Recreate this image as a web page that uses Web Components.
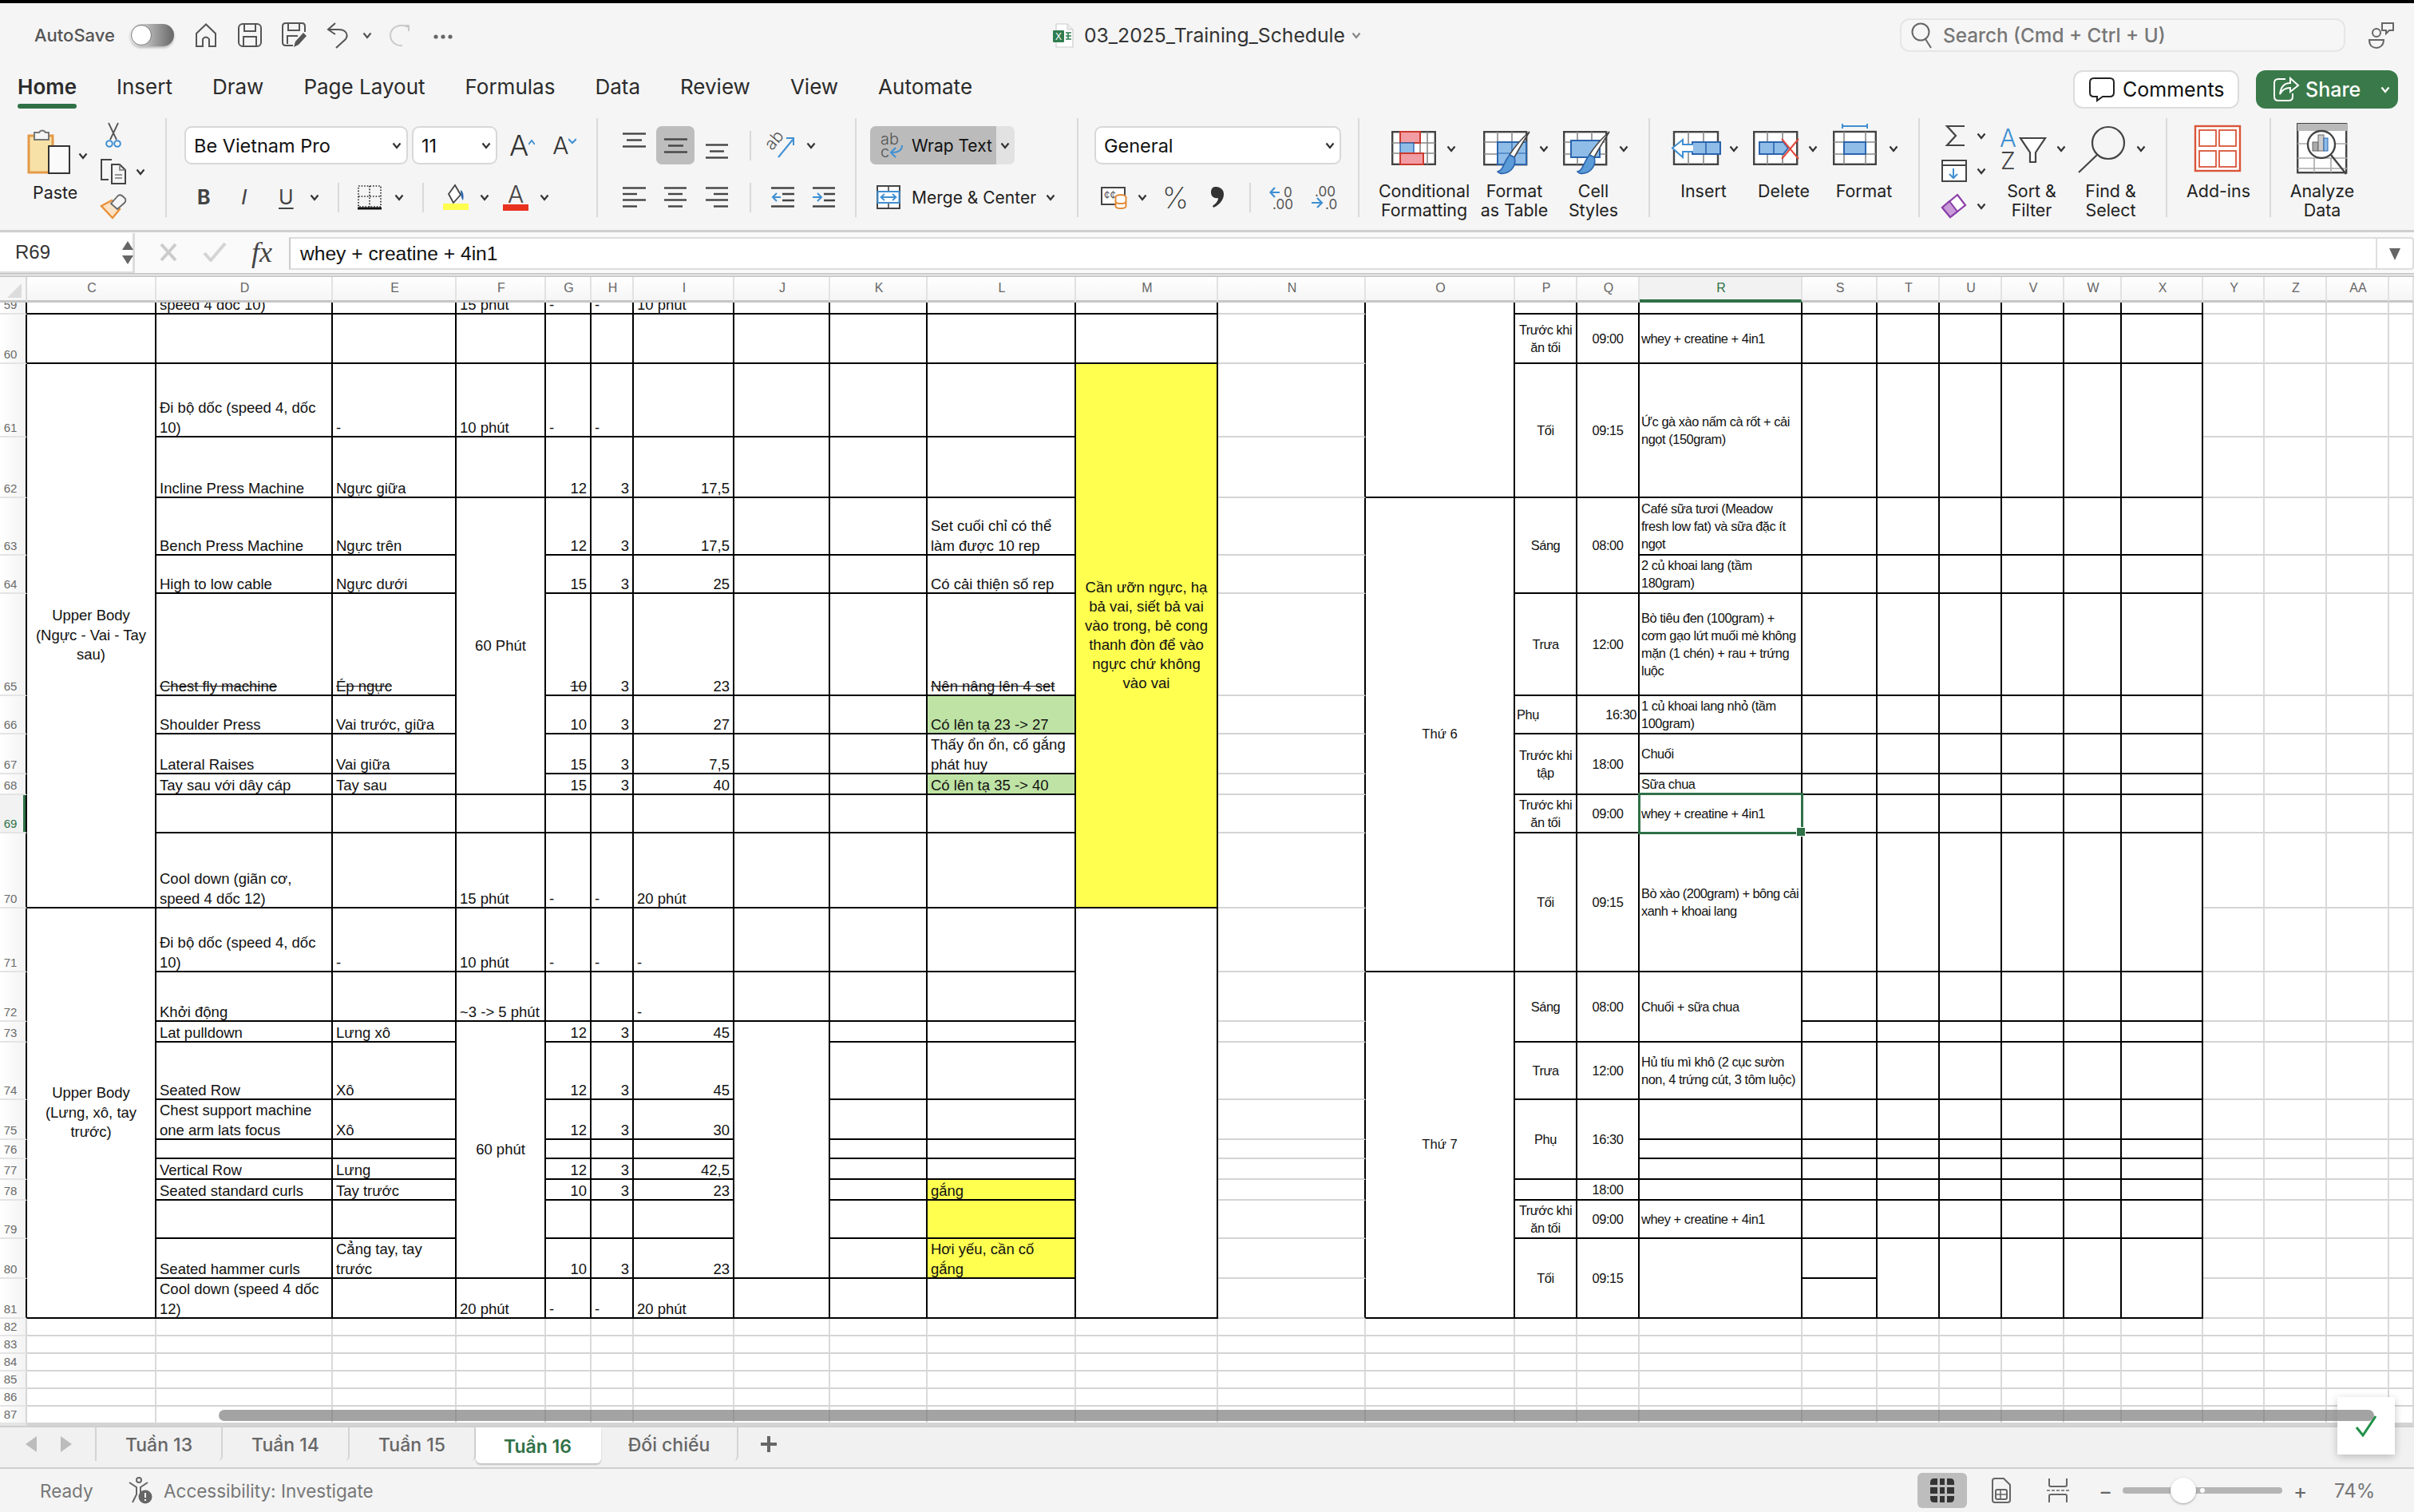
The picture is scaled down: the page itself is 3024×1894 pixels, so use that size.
<!doctype html>
<html lang="vi">
<head>
<meta charset="utf-8">
<title>03_2025_Training_Schedule</title>
<style>
  html, body { margin: 0; padding: 0; background: #f5f5f5; overflow: hidden; }
  body { font-family: Inter, "Liberation Sans", sans-serif; }
</style>
</head>
<body>
<xl-app>
  <xl-titlebar></xl-titlebar>
  <xl-menubar>
    <xl-menu-tab active>Home</xl-menu-tab>
    <xl-menu-tab>Insert</xl-menu-tab>
    <xl-menu-tab>Draw</xl-menu-tab>
    <xl-menu-tab>Page Layout</xl-menu-tab>
    <xl-menu-tab>Formulas</xl-menu-tab>
    <xl-menu-tab>Data</xl-menu-tab>
    <xl-menu-tab>Review</xl-menu-tab>
    <xl-menu-tab>View</xl-menu-tab>
    <xl-menu-tab>Automate</xl-menu-tab>
  </xl-menubar>
  <xl-ribbon></xl-ribbon>
  <xl-formula name="R69">whey + creatine + 4in1</xl-formula>
  <xl-sheet></xl-sheet>
  <xl-sheet-tabs>
    <xl-sheet-tab w="158">Tuần 13</xl-sheet-tab>
    <xl-sheet-tab w="159">Tuần 14</xl-sheet-tab>
    <xl-sheet-tab w="158">Tuần 15</xl-sheet-tab>
    <xl-sheet-tab w="157" active>Tuần 16</xl-sheet-tab>
    <xl-sheet-tab w="172">Đối chiếu</xl-sheet-tab>
  </xl-sheet-tabs>
  <xl-status></xl-status>
  <xl-toast></xl-toast>
</xl-app>

<script>
const D = '#444'
const BL = '#3f8fd2'
const LB = '#8fbde8'
const DB = '#2b64ad'

const lines = (w, rows) => rows.map(([y, a, b]) => `<path d="M${a} ${y}H${b}" stroke="${D}" stroke-width="2.4"/>`).join('')
const brush = `<path d="M58 1C53 9 45 22 39 33L33 30C40 19 50 8 58 1Z" fill="#fff" stroke="${D}" stroke-width="1.6"/><path d="M33 30L39 33C42 42 36 51 27 53C23 54 19 53 18 51C25 50 25 40 33 30Z" fill="#5a9bd8" stroke="${DB}" stroke-width="1.6"/>`
const tableGrid = `<rect x="1.2" y="1.2" width="53" height="41" fill="#fff" stroke="${D}" stroke-width="2.4"/><path d="M1 14H54M1 29H54M18 1V42M36 1V42" stroke="#888" stroke-width="1.6"/>`

const ICONS = {
  home: [28, 30, `<path d="M2 29V13L14 1.5L26 13V29H18V20Q14 15 10 20V29Z" fill="none" stroke="#555" stroke-width="2"/>`],
  save: [30, 30, `<rect x="1" y="1" width="28" height="28" rx="5" fill="none" stroke="#555" stroke-width="2"/><path d="M8 1V10H22V1M7 29V17H23V29" fill="none" stroke="#555" stroke-width="2"/>`],
  saveas: [32, 32, `<path d="M14 29H5Q1 29 1 25V5Q1 1 5 1H25Q29 1 29 5V12" fill="none" stroke="#555" stroke-width="2"/><path d="M8 1V10H22V1M7 27V17H20" fill="none" stroke="#555" stroke-width="2"/><path d="M15 31L17 24L27 13L31 17L21 28Z" fill="#555"/>`],
  undo: [28, 32, `<path d="M11 1L2 9L11 15M2 9H15C24 9 28 15 24 21L12 32" fill="none" stroke="#555" stroke-width="2"/>`],
  redo: [28, 30, `<path d="M20 3H25V10M24 5C14 -1 2 6 2 15C2 24 10 29 17 28" fill="none" stroke="#c9c9c9" stroke-width="2"/>`],
  dots: [24, 6, `<circle cx="3" cy="3" r="2.6" fill="#666"/><circle cx="12" cy="3" r="2.6" fill="#666"/><circle cx="21" cy="3" r="2.6" fill="#666"/>`],
  xlsx: [26, 31, `<path d="M4 1H18L25 8V30H4Z" fill="#fff" stroke="#ccc" stroke-width="1.2"/><path d="M18 1V8H25" fill="#eee" stroke="#ccc" stroke-width="1"/><rect x="0" y="9" width="14" height="15" rx="1" fill="#2f7d4f"/><text x="7" y="21" font-size="12" fill="#fff" text-anchor="middle" font-family="Liberation Sans">X</text><path d="M16 12H23M16 16H23M16 20H23M19 12V20" stroke="#2f7d4f" stroke-width="1.6"/>`],
  search: [26, 34, `<circle cx="12" cy="13" r="10.5" fill="none" stroke="#666" stroke-width="2"/><path d="M18 22L25 33" stroke="#666" stroke-width="2"/>`],
  person: [32, 32, `<circle cx="10" cy="13" r="5" fill="none" stroke="#666" stroke-width="2"/><path d="M1 22H19C19 29 14 32 10 32C5 32 1 29 1 22Z" fill="none" stroke="#666" stroke-width="2"/><path d="M17 1H31V10H26L22 14V10H17Z" fill="#f5f5f5" stroke="#666" stroke-width="2"/>`],
  comment: [32, 30, `<path d="M6 1H26Q31 1 31 6V19Q31 24 26 24H17L10 29V24H6Q1 24 1 19V6Q1 1 6 1Z" fill="#fff" stroke="#222" stroke-width="2"/>`],
  share: [31, 30, `<path d="M15 2H6Q1 2 1 7V24Q1 29 6 29H19Q24 29 24 24V20" fill="none" stroke="#fff" stroke-width="2"/><path d="M21 1L31 10L21 18V13C15 13 11 15 8 21C9 13 13 7 21 7Z" fill="none" stroke="#fff" stroke-width="2"/>`],
  paste: [54, 60, `<path d="M2 12H32V58H2Z" fill="#f8e1a6" stroke="#e39a48" stroke-width="3"/><path d="M9 17V8H15A4.5 4.5 0 0 1 23 8H27V17Z" fill="#f5f5f5" stroke="#777" stroke-width="2"/><rect x="27" y="25" width="26" height="34" fill="#fafafa" stroke="#333" stroke-width="2"/>`],
  cut: [20, 32, `<path d="M4 0L14 21M16 0L6 21" stroke="#555" stroke-width="1.8" fill="none"/><circle cx="5" cy="26" r="3.8" fill="none" stroke="${BL}" stroke-width="2"/><circle cx="15" cy="26" r="3.8" fill="none" stroke="${BL}" stroke-width="2"/>`],
  copy: [32, 32, `<path d="M10 26H1V1H14" fill="none" stroke="${D}" stroke-width="2"/><path d="M14 7V31H31V14L24 7Z" fill="#f5f5f5" stroke="${D}" stroke-width="2"/><path d="M24 7V14H31M18 20H27M18 24H27" fill="none" stroke="#777" stroke-width="1.6"/>`],
  painter: [32, 30, `<path d="M1 14L14 7L24 18L15 29Z" fill="#fbe2c4" stroke="#e8913a" stroke-width="2.4"/><path d="M13 11L22 1Q25 -1 28 2L31 5Q32 8 30 10L21 18Z" fill="#f5f5f5" stroke="#666" stroke-width="1.8"/>`],
  border: [30, 30, `<path d="M1 1H29V27H1ZM15 1V27M1 14H29" fill="none" stroke="#222" stroke-width="1.6" stroke-dasharray="1.6 2"/><path d="M0 29H30" stroke="#111" stroke-width="3"/>`],
  fill: [32, 32, `<path d="M15 1L22 13L13 23L7 12Z" fill="#fff" stroke="${D}" stroke-width="1.8"/><path d="M22 7C26 9 26 16 25 20C23 18 22 13 22 7Z" fill="${DB}"/><rect x="0" y="24" width="32" height="8" fill="#ffff4d"/>`],
  at: [29, 19, lines(29, [[1.5, 0, 29], [9.5, 5, 24], [17.5, 0, 29]])],
  am: [29, 19, lines(29, [[1.5, 0, 29], [9.5, 5, 24], [17.5, 0, 29]])],
  ab: [28, 19, lines(28, [[1.5, 0, 28], [9.5, 5, 23], [17.5, 0, 28]])],
  al: [29, 26, lines(29, [[1.5, 0, 29], [9, 0, 18], [16.5, 0, 29], [24.5, 0, 18]])],
  ac: [28, 26, lines(28, [[1.5, 0, 28], [9, 5, 23], [16.5, 0, 28], [24.5, 5, 23]])],
  ar: [28, 26, lines(28, [[1.5, 0, 28], [9, 10, 28], [16.5, 0, 28], [24.5, 10, 28]])],
  orient: [33, 30, `<text x="-2" y="15" font-size="21" fill="#555" font-family="Inter" font-weight="300" transform="rotate(-50 9 12)">ab</text><path d="M12 30L30 8M22 6H31V15" fill="none" stroke="${BL}" stroke-width="2"/>`],
  outdent: [29, 26, `<path d="M0 1.5H29M14 9H29M14 17H29M0 24.5H29" stroke="${D}" stroke-width="2.4"/><path d="M12 13H2M7 8L2 13L7 18" fill="none" stroke="${BL}" stroke-width="2"/>`],
  indent: [28, 26, `<path d="M0 1.5H28M14 9H28M14 17H28M0 24.5H28" stroke="${D}" stroke-width="2.4"/><path d="M0 13H10M6 8L11 13L6 18" fill="none" stroke="${BL}" stroke-width="2"/>`],
  wrap: [28, 30, `<text x="0" y="14" font-size="20" fill="#555" font-family="Inter" font-weight="300">ab</text><text x="0" y="30" font-size="20" fill="#555" font-family="Inter" font-weight="300">c</text><path d="M27 15C27 21 23 24 14 24M19 18L13 24L19 30" fill="none" stroke="${BL}" stroke-width="2"/>`],
  merge: [30, 30, `<rect x="1" y="1" width="28" height="28" fill="#fff" stroke="${D}" stroke-width="2"/><path d="M1 8H29M1 22H29M15 1V8M15 22V29" stroke="${D}" stroke-width="1.6"/><rect x="1.5" y="8" width="27" height="14" fill="#fff" stroke="${BL}" stroke-width="2"/><path d="M6 15H24M10 11L5.5 15L10 19M20 11L24.5 15L20 19" fill="none" stroke="${BL}" stroke-width="1.8"/>`],
  acct: [32, 27, `<rect x="1" y="1" width="29" height="21" fill="#fff" stroke="${D}" stroke-width="2"/><text x="4" y="15" font-size="13" fill="#555" font-family="Inter">¢¢</text><ellipse cx="25" cy="13" rx="6.5" ry="3" fill="#fff" stroke="#e38b38" stroke-width="2"/><path d="M18.5 13V24C18.5 28 31.5 28 31.5 24V13M18.5 18C18.5 22 31.5 22 31.5 18" fill="#fff" stroke="#e38b38" stroke-width="2"/>`],
  comma: [16, 26, `<path d="M5 0C11 0 16 3 16 9C16 17 10 23 3 26L2 24C6 21 9 18 9 14C4 15 0 12 0 7C0 3 2 0 5 0Z" fill="#333"/>`],
  incdec: [32, 30, `<path d="M13 9H2M7 3L1.5 9L7 15" fill="none" stroke="${BL}" stroke-width="2.2"/><text x="18" y="15" font-size="17" fill="#555" font-family="Inter">0</text><text x="4" y="30" font-size="17" fill="#555" font-family="Inter">.00</text>`],
  decdec: [32, 30, `<text x="4" y="14" font-size="17" fill="#555" font-family="Inter">.00</text><path d="M0 22H12M7 16L13 22L7 28" fill="none" stroke="${BL}" stroke-width="2.2"/><text x="17" y="30" font-size="17" fill="#555" font-family="Inter">.0</text>`],
  cf: [56, 43, `<rect x="1.2" y="1.2" width="53.6" height="40.6" fill="#fff" stroke="${D}" stroke-width="2.4"/><path d="M1 15H55M1 28H55M36 1V42M45 1V42" stroke="#888" stroke-width="1.6"/><rect x="11" y="1" width="25" height="14" fill="#f29ca3" stroke="#cb3a2e" stroke-width="2"/><rect x="11" y="15" width="17" height="13" fill="${LB}" stroke="${DB}" stroke-width="1.4"/><rect x="11" y="28" width="29" height="14" fill="#f29ca3" stroke="#cb3a2e" stroke-width="2"/>`],
  fat: [60, 54, `${tableGrid}<rect x="18" y="14" width="36" height="28" fill="${LB}" stroke="${DB}" stroke-width="2"/><path d="M18 28H54M36 14V42" stroke="${DB}" stroke-width="1.2"/>${brush}`],
  cs: [60, 54, `${tableGrid}<rect x="10" y="12" width="36" height="21" fill="${LB}" stroke="${DB}" stroke-width="2"/>${brush}`],
  ins: [63, 43, `<rect x="4" y="1.2" width="55" height="40.6" fill="#fff" stroke="${D}" stroke-width="2.4"/><path d="M22 1V42M41 1V42" stroke="#888" stroke-width="1.6"/><rect x="27" y="14" width="35" height="15" fill="${LB}" stroke="${DB}" stroke-width="2"/><path d="M44 14V29" stroke="${DB}" stroke-width="1.6"/><path d="M28 17H15V11L2 21.5L15 33V26H28" fill="#fff" stroke="${BL}" stroke-width="2"/>`],
  del: [58, 43, `<rect x="1.2" y="1.2" width="54" height="40.6" fill="#fff" stroke="${D}" stroke-width="2.4"/><path d="M18 1V14M37 1V14M18 29V42M37 29V42" stroke="#888" stroke-width="1.6"/><path d="M8 14H38L44 21.5L38 29H8Z" fill="${LB}" stroke="${DB}" stroke-width="2"/><path d="M26 14V29" stroke="${DB}" stroke-width="1.6"/><path d="M36 10L57 35M57 10L36 35" stroke="#e04a3c" stroke-width="2"/>`],
  fmt: [55, 53, `<path d="M12 1V7M12 4H43M43 1V7" fill="none" stroke="${BL}" stroke-width="2"/><rect x="1.2" y="11" width="52.6" height="40.8" fill="#fff" stroke="${D}" stroke-width="2.4"/><path d="M14 11V52M41 11V52M1 24H54M1 39H54" stroke="#888" stroke-width="1.6"/><rect x="14" y="24" width="27" height="15" fill="${LB}" stroke="${DB}" stroke-width="2"/>`],
  sum: [24, 28, `<path d="M24 2H2L13 14L2 26H24" fill="none" stroke="${D}" stroke-width="2.2"/>`],
  dfill: [32, 28, `<rect x="1" y="1" width="30" height="26" fill="#fff" stroke="${D}" stroke-width="2"/><path d="M1 7H31" stroke="${D}" stroke-width="2"/><path d="M15 11V23M10 18L15 23L20 18" fill="none" stroke="${BL}" stroke-width="2"/>`],
  eraser: [31, 30, `<path d="M20 1L30 14L11 29L1 17Z" fill="#fff" stroke="#8a3fa8" stroke-width="2.2"/><path d="M10 9L20 22L11 29L1 17Z" fill="#c89ad8" stroke="#8a3fa8" stroke-width="2"/>`],
  sort: [58, 52, `<text x="0" y="24" font-size="31" fill="${BL}" font-family="Inter" font-weight="300">A</text><text x="1" y="52" font-size="30" fill="${D}" font-family="Inter" font-weight="300">Z</text><path d="M26 13H57L45 31V43H38V31Z" fill="#fff" stroke="${D}" stroke-width="2.2"/>`],
  find: [59, 58, `<circle cx="38" cy="21" r="20" fill="none" stroke="${D}" stroke-width="2.2"/><path d="M24 36L1 58" stroke="${D}" stroke-width="2.2"/>`],
  addins: [58, 58, `<rect x="1" y="1" width="56" height="56" fill="#fff" stroke="#d9553a" stroke-width="2.4"/><rect x="6" y="6" width="21" height="20" fill="#fff" stroke="#d9553a" stroke-width="1.8"/><rect x="31" y="6" width="21" height="20" fill="#fff" stroke="#d9553a" stroke-width="1.8"/><rect x="6" y="32" width="21" height="20" fill="#fff" stroke="#d9553a" stroke-width="1.8"/><rect x="31" y="32" width="21" height="20" fill="#fff" stroke="#d9553a" stroke-width="1.8"/>`],
  analyze: [64, 64, `<rect x="1.2" y="1.2" width="61" height="61" fill="#fff" stroke="${D}" stroke-width="2.4"/><rect x="1" y="1" width="62" height="9" fill="#b9b9b9"/><path d="M1 26H63M1 44H63M1 57H63M22 44V62M43 44V62" stroke="#aaa" stroke-width="1.6"/><circle cx="31" cy="27" r="17" fill="#fff" stroke="${D}" stroke-width="2.4"/><rect x="20" y="24" width="7" height="11" fill="#aaa" stroke="#666"/><rect x="27" y="15" width="7" height="20" fill="#ccc" stroke="#666"/><rect x="34" y="19" width="5" height="16" fill="${LB}" stroke="${DB}"/><path d="M43 40L62 64" stroke="${D}" stroke-width="2.4"/>`],
  a11y: [30, 34, `<circle cx="13" cy="4" r="3" fill="none" stroke="#666" stroke-width="2"/><path d="M1 7L10 13V22L5 32M24 7L15 13V20" fill="none" stroke="#666" stroke-width="2"/><circle cx="21" cy="25" r="8.5" fill="#666"/><path d="M21 20V26M21 28V30" stroke="#fff" stroke-width="2"/>`],
  grid: [30, 30, `<path d="M5 0H9V8H0V5Q0 0 5 0ZM12 0H18V8H12ZM21 0H25Q30 0 30 5V8H21ZM0 11H9V19H0ZM12 11H18V19H12ZM21 11H30V19H21ZM0 22H9V30H5Q0 30 0 25ZM12 22H18V30H12ZM21 22H30V25Q30 30 25 30H21Z" fill="#333"/>`],
  page: [24, 32, `<path d="M4 1H15L23 9V28Q23 31 20 31H4Q1 31 1 28V4Q1 1 4 1Z" fill="none" stroke="#666" stroke-width="2"/><rect x="5" y="15" width="14" height="12" rx="2" fill="none" stroke="#666" stroke-width="2"/><path d="M5 21H19M11 15V27" stroke="#666" stroke-width="1.6"/>`],
  brk: [28, 32, `<path d="M3 1V9Q3 11 5 11H23Q25 11 25 9V1M3 31V23Q3 21 5 21H23Q25 21 25 23V31" fill="none" stroke="#666" stroke-width="2"/><path d="M0 16H28" stroke="#666" stroke-width="1.6" stroke-dasharray="4 2"/>`],
  ok: [30, 30, `<path d="M3 17L11 27L27 3" fill="none" stroke="#1f9148" stroke-width="3"/>`],
  tleft: [16, 20, `<path d="M16 0V20L2 10Z" fill="#bcbcbc"/>`],
  tright: [16, 20, `<path d="M0 0V20L14 10Z" fill="#bcbcbc"/>`],
  plus: [20, 20, `<path d="M10 0V20M0 10H20" stroke="#666" stroke-width="4"/>`]
}

class XlIcon extends HTMLElement {
  connectedCallback () {
    if (this.shadowRoot) return
    const [w, h, body] = ICONS[this.getAttribute('name')]
    this.attachShadow({ mode: 'open' })
    this.shadowRoot.innerHTML = `<style>:host { display: block; flex: none; width: ${w}px; height: ${h}px; line-height: 0; } svg { overflow: visible; }</style><svg width="${w}" height="${h}" viewBox="0 0 ${w} ${h}">${body}</svg>`
  }
}

class XlChev extends HTMLElement {
  constructor () {
    super()
    this.attachShadow({ mode: 'open' })
    this.shadowRoot.innerHTML = `<style>:host { display: block; flex: none; width: 12px; height: 9px; line-height: 0; }</style><svg width="12" height="9" viewBox="0 0 12 9"><path d="M1.5 1.5L6 7L10.5 1.5" fill="none" stroke="${this.getAttribute('color') || '#333'}" stroke-width="2.2"/></svg>`
  }
}

class XlApp extends HTMLElement {
  constructor () {
    super()
    this.attachShadow({ mode: 'open' })
    this.shadowRoot.innerHTML = `<style>
      :host { display: flex; flex-direction: column; width: 3024px; height: 1894px; border-top: 4px solid #000; box-sizing: border-box; overflow: hidden; background: #f5f5f5; position: relative; }
      </style><slot></slot>`
  }
}

class XlTitlebar extends HTMLElement {
  constructor () {
    super()
    this.attachShadow({ mode: 'open' })
    this.shadowRoot.innerHTML = `<style>
      :host { display: flex; align-items: center; height: 80px; flex: none; font-size: 22px; color: #555; }
      .auto { margin-left: 43px; width: 100px; font-weight: 500; }
      .toggle { margin-left: 20px; width: 55px; height: 28px; border-radius: 14px; background: linear-gradient(90deg, #eee, #666); position: relative; box-shadow: 0 2px 3px rgba(0,0,0,.25); }
      .toggle i { display: block; width: 24px; height: 24px; margin: 1px 0 0 1px; border-radius: 50%; background: #fff; border: 1px solid #777; box-sizing: content-box; }
      .file { font-size: 24.7px; color: #333; margin-left: 13px; width: 326px; white-space: nowrap; }
      .search { width: 558px; height: 42px; box-sizing: border-box; border: 2px solid #e6e6e6; border-radius: 12px; display: flex; align-items: center; padding-left: 12px; background: #f6f6f6; color: #777; font-weight: 500; font-size: 24.3px; white-space: nowrap; }
      .search span { margin-left: 14px; }
      </style>
      <span class="auto">AutoSave</span>
      <div class="toggle"><i></i></div>
      <xl-icon name="home" style="margin-left:26px"></xl-icon>
      <xl-icon name="save" style="margin-left:26px"></xl-icon>
      <xl-icon name="saveas" style="margin-left:25px"></xl-icon>
      <xl-icon name="undo" style="margin-left:24px"></xl-icon>
      <xl-chev style="margin-left:17px" color="#555"></xl-chev>
      <xl-icon name="redo" style="margin-left:21px"></xl-icon>
      <xl-icon name="dots" style="margin-left:28px"></xl-icon>
      <xl-icon name="xlsx" style="margin-left:752px"></xl-icon>
      <span class="file">03_2025_Training_Schedule</span>
      <xl-chev style="margin-left:9px" color="#888"></xl-chev>
      <div class="search" style="margin-left:675px"><xl-icon name="search"></xl-icon><span>Search (Cmd + Ctrl + U)</span></div>
      <xl-icon name="person" style="margin-left:29px"></xl-icon>`
  }
}

class XlMenuTab extends HTMLElement {
  constructor () {
    super()
    this.attachShadow({ mode: 'open' })
    const on = this.hasAttribute('active')
    this.shadowRoot.innerHTML = `<style>
      :host { display: flex; flex-direction: column; height: 52px; flex: none; font-size: 26px; color: #2b2b2b; white-space: nowrap; font-weight: ${on ? 600 : 400}; }
      span { height: 46px; line-height: 50px; }
      i { display: block; height: 6px; border-radius: 3px; background: ${on ? '#2f7147' : 'transparent'}; }
      </style><span><slot></slot></span><i></i>`
  }
}

class XlMenubar extends HTMLElement {
  constructor () {
    super()
    this.attachShadow({ mode: 'open' })
    this.shadowRoot.innerHTML = `<style>
      :host { display: flex; height: 52px; flex: none; padding-left: 22px; gap: 50px; align-items: flex-start; }
      .btns { margin-left: auto; margin-right: 20px; display: flex; gap: 21px; margin-top: 4px; }
      .b { height: 48px; box-sizing: border-box; border-radius: 12px; display: flex; align-items: center; font-size: 25px; }
      .c { width: 208px; background: #fff; border: 2px solid #dcdcdc; padding-left: 18px; color: #111; gap: 10px; }
      .s { width: 178px; background: #3a7a4a; color: #fff; padding-left: 22px; gap: 9px; font-weight: 500; }
      .s xl-chev { margin-left: 16px; }
      </style><slot></slot>
      <div class="btns">
        <div class="b c"><xl-icon name="comment"></xl-icon>Comments</div>
        <div class="b s"><xl-icon name="share"></xl-icon>Share<xl-chev color="#fff"></xl-chev></div>
      </div>`
  }
}

class XlSelect extends HTMLElement {
  constructor () {
    super()
    this.attachShadow({ mode: 'open' })
    this.shadowRoot.innerHTML = `<style>
      :host { display: flex; flex: none; align-items: center; justify-content: space-between; height: 48px; box-sizing: border-box; background: #fff; border: 2px solid #d8d8d8; border-radius: 9px; padding: 0 6px 0 10px; font-size: 23.5px; color: #111; white-space: nowrap; }
      </style><span><slot></slot></span><xl-chev></xl-chev>`
  }
}

class XlLarge extends HTMLElement {
  constructor () {
    super()
    this.attachShadow({ mode: 'open' })
    const g = n => this.getAttribute(n)
    const chev = g('chev') !== null ? `<xl-chev style="margin:${34 - Number(g('top'))}px 0 0 ${g('chev')}px"></xl-chev>` : ''
    this.shadowRoot.innerHTML = `<style>
      :host { display: block; flex: none; width: ${g('w')}px; height: 124px; }
      .i { display: flex; height: 79px; padding-top: ${g('top')}px; padding-left: ${g('left')}px; box-sizing: border-box; align-items: flex-start; }
      .l { font-size: 21.4px; line-height: 24px; text-align: center; color: #222; white-space: nowrap; }
      </style><div class="i"><xl-icon name="${g('icon')}"></xl-icon>${chev}</div><div class="l"><slot></slot></div>`
  }
}

class XlRibbon extends HTMLElement {
  constructor () {
    super()
    this.attachShadow({ mode: 'open' })
    const m = (n, x, extra) => `<xl-icon name="${n}" style="margin-left:${x}px;${extra || ''}"></xl-icon>`
    const c = (x, col) => `<xl-chev style="margin-left:${x}px"${col ? ` color="${col}"` : ''}></xl-chev>`
    this.shadowRoot.innerHTML = `<style>
      :host { display: flex; flex: none; height: 155px; box-sizing: border-box; padding-top: 12px; border-bottom: 3px solid #cfcfcf; color: #222; }
      .g { height: 124px; box-sizing: border-box; border-right: 2px solid #dadada; display: flex; flex: none; }
      .st { display: flex; flex-direction: column; padding-top: 10px; }
      .r { display: flex; align-items: center; height: 48px; flex: none; }
      .r2 { margin-top: 20px; height: 42px; }
      .thin { width: 2px; height: 37px; background: #d9d9d9; flex: none; }
      .t { flex: none; line-height: 1; }
      .b { font-weight: 700; font-size: 25px; width: 16px; color: #444; }
      .it { font-family: "Liberation Sans"; font-style: italic; font-size: 27px; color: #444; width: 12px; }
      .u { font-size: 25px; color: #444; text-decoration: underline; text-underline-offset: 4px; width: 16px; }
      .ca { font-weight: 300; color: #333; }
      .fc { display: flex; flex-direction: column; align-items: center; width: 32px; flex: none; }
      .fc .t { font-size: 30px; font-weight: 300; height: 25px; line-height: 25px; color: #444; }
      .fc i { display: block; width: 32px; height: 8px; background: #e8321f; }
      .sel { width: 48px; height: 48px; border-radius: 7px; background: #bdbdbd; display: flex; align-items: center; justify-content: center; flex: none; }
      .wrap { display: flex; height: 48px; width: 181px; border-radius: 7px; overflow: hidden; flex: none; background: #e2e2e2; }
      .wrap .l { display: flex; align-items: center; width: 158px; background: #bbb; padding-left: 13px; box-sizing: border-box; flex: none; }
      .wrap span { font-size: 21px; margin-left: 11px; white-space: nowrap; color: #111; }
      .wrap xl-chev { margin: 20px 0 0 5px; }
      .mc { font-size: 21px; margin-left: 14px; white-space: nowrap; color: #222; width: 158px; flex: none; }
      .pc { font-size: 37px; font-weight: 200; width: 32px; text-align: center; color: #333; }
      .paste { width: 92px; display: flex; flex-direction: column; margin-left: 34px; }
      .paste .ic { display: flex; height: 81px; padding-top: 10px; box-sizing: border-box; }
      .paste .lb { font-size: 21.4px; line-height: 24px; padding-left: 7px; }
      .clip { display: flex; flex-direction: column; }
      .clip div { display: flex; align-items: center; }
      </style>

      <div class="g" style="width:209px">
        <div class="paste">
          <div class="ic"><xl-icon name="paste"></xl-icon><xl-chev style="margin:33px 0 0 10px"></xl-chev></div>
          <div class="lb">Paste</div>
        </div>
        <div class="clip">
          <xl-icon name="cut" style="margin:6px 0 0 6px"></xl-icon>
          <div style="margin-top:13px"><xl-icon name="copy"></xl-icon>${c(12)}</div>
          <xl-icon name="painter" style="margin-top:13px"></xl-icon>
        </div>
      </div>

      <div class="g" style="width:540px">
        <div class="st">
          <div class="r">
            <xl-select style="margin-left:22px;width:280px">Be Vietnam Pro</xl-select>
            <xl-select style="margin-left:5px;width:107px">11</xl-select>
            <span class="t ca" style="margin-left:15px;font-size:36px">A</span><svg width="8" height="26" viewBox="4 0 8 26" style="flex:none"><path d="M4 12L8 7L12 12" fill="none" stroke="${BL}" stroke-width="2"/></svg>
            <span class="t ca" style="margin-left:22px;font-size:30px">A</span><svg width="10" height="26" viewBox="0 0 10 26" style="flex:none"><path d="M0 5L5 10L10 5" fill="none" stroke="${BL}" stroke-width="2"/></svg>
          </div>
          <div class="r r2">
            <span class="t b" style="margin-left:38px">B</span>
            <span class="t it" style="margin-left:39px">I</span>
            <span class="t u" style="margin-left:35px">U</span>
            ${c(23)}
            <div class="thin" style="margin-left:23px"></div>
            ${m('border', 23)}${c(16)}
            <div class="thin" style="margin-left:23px"></div>
            ${m('fill', 24)}${c(14)}
            <div class="fc" style="margin-left:17px"><span class="t">A</span><i></i></div>${c(14)}
          </div>
        </div>
      </div>

      <div class="g" style="width:324px">
        <div class="st">
          <div class="r">
            ${m('at', 31, 'margin-bottom:14px')}
            <div class="sel" style="margin-left:13px"><xl-icon name="am"></xl-icon></div>
            ${m('ab', 14, 'margin-top:14px')}
            <div class="thin" style="margin-left:27px"></div>
            ${m('orient', 22)}${c(14)}
          </div>
          <div class="r r2">
            ${m('al', 31)}${m('ac', 23)}${m('ar', 24)}
            <div class="thin" style="margin-left:27px"></div>
            ${m('outdent', 25)}${m('indent', 23)}
          </div>
        </div>
      </div>

      <div class="g" style="width:278px">
        <div class="st">
          <div class="r" style="margin-left:17px">
            <div class="wrap"><div class="l"><xl-icon name="wrap"></xl-icon><span>Wrap Text</span></div><xl-chev></xl-chev></div>
          </div>
          <div class="r r2">
            ${m('merge', 25)}<span class="mc">Merge &amp; Center</span>${c(10)}
          </div>
        </div>
      </div>

      <div class="g" style="width:352px">
        <div class="st">
          <div class="r"><xl-select style="margin-left:20px;width:309px">General</xl-select></div>
          <div class="r r2">
            ${m('acct', 28)}${c(14)}
            <span class="t pc" style="margin-left:19px">%</span>
            ${m('comma', 29)}
            <div class="thin" style="margin-left:32px"></div>
            ${m('incdec', 23)}${m('decdec', 21)}
          </div>
        </div>
      </div>

      <div class="g" style="width:364px;padding-left:21px">
        <xl-large w="120" icon="cf" top="16" left="19" chev="13">Conditional<br>Formatting</xl-large>
        <xl-large w="106" icon="fat" top="16" left="14" chev="10">Format<br>as Table</xl-large>
        <xl-large w="92" icon="cs" top="16" left="8" chev="10">Cell<br>Styles</xl-large>
      </div>

      <div class="g" style="width:338px;padding-left:23px">
        <xl-large w="88" icon="ins" top="16" left="3" chev="10">Insert</xl-large>
        <xl-large w="113" icon="del" top="16" left="18" chev="11">Delete</xl-large>
        <xl-large w="88" icon="fmt" top="6" left="5" chev="15">Format</xl-large>
      </div>

      <div class="g" style="width:310px;padding-left:27px">
        <div class="clip" style="width:68px;flex:none;padding-top:8px">
          <div>${m('sum', 5)}${c(15)}</div>
          <div style="margin-top:16px">${m('dfill', 0)}${c(12)}</div>
          <div style="margin-top:15px">${m('eraser', 0)}${c(13)}</div>
        </div>
        <xl-large w="90" icon="sort" top="12" left="5" chev="13">Sort &amp;<br>Filter</xl-large>
        <xl-large w="108" icon="find" top="10" left="13" chev="14">Find &amp;<br>Select</xl-large>
      </div>

      <div class="g" style="width:130px;padding-left:20px">
        <xl-large w="88" icon="addins" top="9" left="14">Add-ins</xl-large>
      </div>

      <div class="g" style="width:179px;padding-left:20px;border:0">
        <xl-large w="88" icon="analyze" top="6" left="12">Analyze<br>Data</xl-large>
      </div>`
  }
}

class XlFormula extends HTMLElement {
  constructor () {
    super()
    this.attachShadow({ mode: 'open' })
    this.shadowRoot.innerHTML = `<style>
      :host { display: flex; flex: none; height: 56px; box-sizing: border-box; border-bottom: 5px double #c9c9c9; background: #fafafa; align-items: flex-start; }
      .name { width: 169px; height: 50px; margin-top: 1px; box-sizing: border-box; background: #fff; border-right: 3px solid #dcdcdc; border-bottom: 2px solid #ddd; display: flex; align-items: center; font: 24px "Liberation Sans", sans-serif; color: #333; padding-left: 19px; justify-content: space-between; }
      .arrows { display: flex; flex-direction: column; gap: 7px; margin-right: -1px; }
      .btn { display: flex; align-items: center; height: 50px; width: 193px; flex: none; }
      .fx { font: italic 36px "Liberation Serif", serif; color: #444; }
      .in { flex: 1; height: 41px; margin-top: 6px; box-sizing: border-box; background: #fff; border: 2px solid #dedede; border-left: 2px solid #ccc; border-right: 0; display: flex; align-items: center; padding-left: 12px; font: 24.6px "Liberation Sans", sans-serif; color: #111; white-space: nowrap; }
      .dd { width: 48px; height: 41px; margin-top: 6px; box-sizing: border-box; background: #fff; border: 2px solid #dedede; display: flex; align-items: center; justify-content: center; flex: none; border-radius: 0 4px 4px 0; }
      </style>
      <div class="name">${this.getAttribute('name')}<div class="arrows"><svg width="14" height="11" viewBox="0 0 14 11"><path d="M7 0L14 11H0Z" fill="#666"/></svg><svg width="14" height="11" viewBox="0 0 14 11"><path d="M0 0H14L7 11Z" fill="#666"/></svg></div></div>
      <div class="btn">
        <svg width="24" height="24" viewBox="0 0 24 24" style="margin-left:30px;flex:none"><path d="M3 2L21 22M21 2L3 22" stroke="#ccc" stroke-width="4"/></svg>
        <svg width="30" height="24" viewBox="0 0 30 24" style="margin-left:31px;flex:none"><path d="M2 13L10 22L28 1" fill="none" stroke="#d4d4d4" stroke-width="4"/></svg>
        <span class="fx" style="margin-left:31px">fx</span>
      </div>
      <div class="in"><slot></slot></div>
      <div class="dd"><svg width="14" height="20" viewBox="0 0 14 20"><path d="M0 3H14L7 18Z" fill="#666"/></svg></div>`
  }
}

const COLS = [['C', 162], ['D', 221], ['E', 155], ['F', 112], ['G', 57], ['H', 53], ['I', 126], ['J', 120], ['K', 122], ['L', 186], ['M', 178], ['N', 185], ['O', 187], ['P', 78], ['Q', 78], ['R', 204], ['S', 94], ['T', 78], ['U', 78], ['V', 78], ['W', 72], ['X', 102], ['Y', 77], ['Z', 78], ['AA', 78], ['', 31]]
const ROW_H = [15, 62, 92, 76, 72, 48, 128, 48, 50, 26, 48, 94, 80, 62, 26, 72, 50, 24, 26, 26, 48, 50, 50, 22, 22, 22, 22, 22, 22, 2]
const FIRST_ROW = 59
const LAST_BOX = 81

// each row: D, E, F, G, H, I, L  ('~' in front means struck through)
const WORK = {
  59: ['speed 4 dốc 10)', '', '15 phút', '-', '-', '10 phút'],
  61: ['Đi bộ dốc (speed 4, dốc<br>10)', '-', '10 phút', '-', '-'],
  62: ['Incline Press Machine', 'Ngực giữa', '', '12', '3', '17,5'],
  63: ['Bench Press Machine', 'Ngực trên', '', '12', '3', '17,5', 'Set cuối chỉ có thể<br>làm được 10 rep'],
  64: ['High to low cable', 'Ngực dưới', '', '15', '3', '25', 'Có cải thiện số rep'],
  65: ['~Chest fly machine', '~Ép ngực', '', '~10', '3', '23', '~Nên nâng lên 4 set'],
  66: ['Shoulder Press', 'Vai trước, giữa', '', '10', '3', '27', 'Có lên tạ 23 -> 27'],
  67: ['Lateral Raises', 'Vai giữa', '', '15', '3', '7,5', 'Thấy ổn ổn, cố gắng<br>phát huy'],
  68: ['Tay sau với dây cáp', 'Tay sau', '', '15', '3', '40', 'Có lên tạ 35 -> 40'],
  70: ['Cool down (giãn cơ,<br>speed 4 dốc 12)', '', '15 phút', '-', '-', '20 phút'],
  71: ['Đi bộ dốc (speed 4, dốc<br>10)', '-', '10 phút', '-', '-', '-'],
  72: ['Khởi động', '', '~3 -> 5 phút', '', '', '-'],
  73: ['Lat pulldown', 'Lưng xô', '', '12', '3', '45'],
  74: ['Seated Row', 'Xô', '', '12', '3', '45'],
  75: ['Chest support machine<br>one arm lats focus', 'Xô', '', '12', '3', '30'],
  77: ['Vertical Row', 'Lưng', '', '12', '3', '42,5'],
  78: ['Seated standard curls', 'Tay trước', '', '10', '3', '23', 'gắng'],
  80: ['Seated hammer curls', 'Cẳng tay, tay<br>trước', '', '10', '3', '23', 'Hơi yếu, cần cố<br>gắng'],
  81: ['Cool down (speed 4 dốc<br>12)', '', '20 phút', '-', '-', '20 phút']
}

const WHEY = 'whey + creatine + 4in1'
const TRUOC_TOI = 'Trước khi<br>ăn tối'

// merged or centred cells: col, rowFrom, rowTo, text, class
const SPANS = [
  ['C', 61, 70, 'Upper Body<br>(Ngực - Vai - Tay<br>sau)', 'mid'],
  ['C', 71, 81, 'Upper Body<br>(Lưng, xô, tay<br>trước)', 'mid'],
  ['F', 63, 68, '60 Phút', 'mid'],
  ['F', 73, 80, '60 phút', 'mid'],
  ['J', 73, 80, '', ''],
  ['M', 61, 70, 'Cần ưỡn ngực, hạ<br>bả vai, siết bả vai<br>vào trong, bẻ cong<br>thanh đòn để vào<br>ngực chứ không<br>vào vai', 'mid yel note'],
  ['M', 71, 81, '', ''],
  ['O', 59, 62, '', ''],
  ['O', 63, 71, 'Thứ 6', 'mid day'],
  ['O', 72, 81, 'Thứ 7', 'mid day'],
  ['P', 60, 60, TRUOC_TOI, 'mid sm'], ['Q', 60, 60, '09:00', 'mid sm'], ['R', 60, 60, WHEY, 'lmid sm'],
  ['P', 61, 62, 'Tối', 'mid sm'], ['Q', 61, 62, '09:15', 'mid sm'], ['R', 61, 62, 'Ức gà xào nấm cà rốt + cải<br>ngọt (150gram)', 'lmid sm'],
  ['P', 63, 64, 'Sáng', 'mid sm'], ['Q', 63, 64, '08:00', 'mid sm'],
  ['R', 63, 63, 'Café sữa tươi (Meadow<br>fresh low fat) và sữa đặc ít<br>ngọt', 'lmid sm'],
  ['R', 64, 64, '2 củ khoai lang (tầm<br>180gram)', 'lmid sm'],
  ['P', 65, 65, 'Trưa', 'mid sm'], ['Q', 65, 65, '12:00', 'mid sm'],
  ['R', 65, 65, 'Bò tiêu đen (100gram) +<br>cơm gạo lứt muối mè không<br>mặn (1 chén) + rau + trứng<br>luộc', 'lmid sm'],
  ['P', 66, 66, 'Phụ', 'lmid sm'], ['Q', 66, 66, '16:30', 'rmid sm'],
  ['R', 66, 66, '1 củ khoai lang nhỏ (tầm<br>100gram)', 'lmid sm'],
  ['P', 67, 68, 'Trước khi<br>tập', 'mid sm'], ['Q', 67, 68, '18:00', 'mid sm'],
  ['R', 67, 67, 'Chuối', 'lmid sm'], ['R', 68, 68, 'Sữa chua', 'lmid sm'],
  ['P', 69, 69, TRUOC_TOI, 'mid sm'], ['Q', 69, 69, '09:00', 'mid sm'], ['R', 69, 69, WHEY, 'lmid sm cur'],
  ['P', 70, 71, 'Tối', 'mid sm'], ['Q', 70, 71, '09:15', 'mid sm'],
  ['R', 70, 71, 'Bò xào (200gram) + bông cải<br>xanh + khoai lang', 'lmid sm tt'],
  ['P', 72, 73, 'Sáng', 'mid sm'], ['Q', 72, 73, '08:00', 'mid sm'], ['R', 72, 73, 'Chuối + sữa chua', 'lmid sm'],
  ['P', 74, 74, 'Trưa', 'mid sm'], ['Q', 74, 74, '12:00', 'mid sm'],
  ['R', 74, 74, 'Hủ tíu mì khô (2 cục sườn<br>non, 4 trứng cút, 3 tôm luộc)', 'lmid sm'],
  ['P', 75, 77, 'Phụ', 'mid sm'], ['Q', 75, 77, '16:30', 'mid sm'],
  ['Q', 78, 78, '18:00', 'mid sm'],
  ['P', 79, 79, TRUOC_TOI, 'mid sm'], ['Q', 79, 79, '09:00', 'mid sm'], ['R', 79, 79, WHEY, 'lmid sm'],
  ['P', 80, 81, 'Tối', 'mid sm'], ['Q', 80, 81, '09:15', 'mid sm'], ['R', 80, 81, '', ''],
  ['R', 78, 78, '', '']
]
'STUVWX'.split('').forEach(c => SPANS.push([c, 61, 62, '', ''], [c, 70, 71, '', '']))
'TUVWX'.split('').forEach(c => SPANS.push([c, 80, 81, '', '']))

const FILLS = { 'L66': 'grn', 'L68': 'grn', 'L78': 'yel', 'L79': 'yel', 'L80': 'yel' }
const BOXED = new Set('CDEFGHIJKLMOPQRSTUVWX'.split(''))

class XlSheet extends HTMLElement {
  constructor () {
    super()
    this.attachShadow({ mode: 'open' })
    const colIdx = {}
    COLS.forEach(([n], i) => { colIdx[n] = i + 2 })
    const rowTrack = r => r - FIRST_ROW + 2
    const covered = new Set()
    const spanAt = {}
    SPANS.forEach(s => {
      spanAt[s[0] + s[1]] = s
      for (let r = s[1]; r <= s[2]; r++) covered.add(s[0] + r)
    })

    let html = '<div class="corner"><svg width="18" height="18" viewBox="0 0 18 18"><path d="M18 0V18H0Z" fill="#dcdcdc"/></svg></div>'
    COLS.forEach(([n]) => {
      html += `<div class="ch${n === 'R' ? ' chs' : ''}">${n}</div>`
    })

    ROW_H.forEach((h, i) => {
      const r = FIRST_ROW + i
      html += `<div class="rh${r === 69 ? ' rhs' : ''}${r <= LAST_BOX ? ' kr' : ''}" style="grid-row:${i + 2};grid-column:1">${r < 88 ? r : ''}</div>`
      COLS.forEach(([n]) => {
        const key = n + r
        const span = spanAt[key]
        if (covered.has(key) && !span) return
        const to = span ? span[2] : r
        const inBox = r <= LAST_BOX
        let cls = 'c'
        if (inBox && BOXED.has(n)) cls += ' kb kr'
        if (inBox && n === 'N') cls += ' kr'
        if (to === LAST_BOX && BOXED.has(n)) cls += ' kb'
        if (FILLS[key]) cls += ' ' + FILLS[key]
        let text = ''
        if (span) {
          text = span[3]
          cls += ' ' + span[4]
        } else if (WORK[r]) {
          const pos = ['D', 'E', 'F', 'G', 'H', 'I', 'L'].indexOf(n)
          if (pos >= 0) text = WORK[r][pos] || ''
        }
        if (!span && /^~?\d+(,\d+)?$/.test(text)) cls += ' num'
        if (text[0] === '~' && text[1] !== '3') text = `<s>${text.slice(1)}</s>`
        const inner = text ? `<span>${text}</span>` : ''
        const sel = key === 'R69' ? '<b class="sel"><i></i></b>' : ''
        html += `<div class="${cls}" style="grid-column:${colIdx[n]};grid-row:${rowTrack(r)} / span ${to - r + 1}">${inner}${sel}</div>`
      })
    })

    this.shadowRoot.innerHTML = `<style>
      :host { display: block; flex: none; width: 3024px; height: 1439px; position: relative; overflow: hidden; background: #fff; font: 18.5px/24.4px "Liberation Sans", sans-serif; color: #111; }
      .grid { display: grid; grid-template-columns: 34px ${COLS.map(c => c[1] + 'px').join(' ')}; grid-template-rows: 32px ${ROW_H.map(h => h + 'px').join(' ')}; }
      .corner { grid-row: 1; grid-column: 1; position: relative; z-index: 3; background: #f7f7f7; border-right: 2px solid #d8d8d8; border-bottom: 3px solid #c6c6c6; box-sizing: border-box; display: flex; justify-content: flex-end; padding: 8px 5px 0 0; }
      .ch { grid-row: 1; position: relative; z-index: 3; background: linear-gradient(#fff, #f5f5f5); border-right: 2px solid #e2e2e2; border-bottom: 3px solid #c6c6c6; box-sizing: border-box; display: flex; align-items: center; justify-content: center; padding-left: 2px; color: #666; font-size: 16px; }
      .chs { background: #f2f2f2; color: #2f7147; border-bottom: 4px solid #2f7147; }
      .rh { position: relative; z-index: 2; background: linear-gradient(90deg, #fff, #f3f3f3); border-bottom: 2px solid #e4e4e4; border-right: 2px solid #d6d6d6; box-sizing: border-box; display: flex; align-items: flex-end; justify-content: center; padding-right: 6px; font-size: 15px; line-height: 20px; color: #6b6b6b; overflow: hidden; }
      .rh.kr { border-right-color: #000; }
      .rhs { background: #f2f2f2; color: #2f7147; box-shadow: inset -3px 0 0 #2f7147; }
      .c { box-sizing: border-box; border-right: 2px solid #dadada; border-bottom: 2px solid #d4d4d4; display: flex; align-items: flex-end; padding: 0 4px; white-space: nowrap; position: relative; min-width: 0; }
      .c > span { display: block; margin-bottom: -2px; }
      .kb { border-bottom-color: #000; }
      .kr { border-right-color: #000; }
      .num { justify-content: flex-end; }
      .mid { align-items: center; justify-content: center; text-align: center; }
      .lmid { align-items: center; }
      .rmid { align-items: center; justify-content: flex-end; padding-right: 1px; }
      .mid > span, .lmid > span, .rmid > span { margin-bottom: 0; }
      .sm { font-size: 16.4px; line-height: 22px; letter-spacing: -0.45px; padding: 0 2px; }
      .tt { letter-spacing: -0.55px; }
      .day { font-size: 16.6px; }
      .yel { background: #ffff50; }
      .grn { background: #bfe3a5; }
      .note { font-size: 18.6px; line-height: 24px; }
      .sel { position: absolute; left: -2px; top: -3px; right: -3px; bottom: -3px; border: 3px solid #2f7147; box-sizing: border-box; z-index: 1; }
      .sel i { position: absolute; right: -6px; bottom: -6px; width: 10px; height: 10px; background: #2f7147; border: 1px solid #fff; }
      .bar { position: absolute; left: 274px; width: 2700px; top: 1419px; height: 14px; border-radius: 7px; background: rgba(115,115,115,.66); z-index: 4; }
      </style>
      <div class="grid">${html}</div>
      <div class="bar"></div>`
  }
}

class XlToast extends HTMLElement {
  constructor () {
    super()
    this.attachShadow({ mode: 'open' })
    this.shadowRoot.innerHTML = `<style>
      :host { position: absolute; left: 2928px; top: 1746px; width: 72px; height: 72px; background: #fff; box-shadow: 0 3px 10px rgba(0,0,0,.22); display: flex; align-items: center; justify-content: center; }
      </style><xl-icon name="ok"></xl-icon>`
  }
}

class XlSheetTab extends HTMLElement {
  constructor () {
    super()
    this.attachShadow({ mode: 'open' })
    const on = this.hasAttribute('active')
    this.shadowRoot.innerHTML = `<style>
      :host { display: flex; flex: none; align-items: center; justify-content: center; width: ${this.getAttribute('w')}px; height: ${on ? 45 : 42}px; padding-top: 2px; box-sizing: border-box; font-size: 23px; font-weight: ${on ? 600 : 500}; color: ${on ? '#2f7147' : '#666'}; background: ${on ? '#fff' : 'transparent'}; border-right: 2px solid ${on ? 'transparent' : '#d4d4d4'}; border-radius: 0 0 6px 6px; box-shadow: ${on ? '0 2px 2px rgba(0,0,0,.2)' : 'none'}; white-space: nowrap; }
      </style><slot></slot>`
  }
}

class XlSheetTabs extends HTMLElement {
  constructor () {
    super()
    this.attachShadow({ mode: 'open' })
    this.shadowRoot.innerHTML = `<style>
      :host { display: flex; flex: none; height: 54px; box-sizing: border-box; background: #f1f1f1; border-top: 2px solid #cfcfcf; border-bottom: 2px solid #cfcfcf; align-items: flex-start; }
      .nav { display: flex; align-items: center; width: 121px; height: 42px; box-sizing: border-box; flex: none; border-right: 2px solid #d4d4d4; padding-left: 30px; gap: 30px; }
      .plus { margin: 11px 0 0 28px; }
      </style>
      <div class="nav"><xl-icon name="tleft"></xl-icon><xl-icon name="tright"></xl-icon></div>
      <slot></slot>
      <xl-icon class="plus" name="plus"></xl-icon>`
  }
}

class XlStatus extends HTMLElement {
  constructor () {
    super()
    this.attachShadow({ mode: 'open' })
    this.shadowRoot.innerHTML = `<style>
      :host { display: flex; flex: 1; align-items: center; background: #f4f4f4; font-size: 22.5px; color: #777; white-space: nowrap; }
      .grid { display: flex; align-items: center; justify-content: center; width: 62px; height: 44px; border-radius: 6px; background: #bdbdbd; flex: none; }
      .track { width: 200px; height: 8px; border-radius: 4px; background: #b5b5b5; margin-left: 14px; display: flex; align-items: center; flex: none; }
      .thumb { width: 32px; height: 32px; border-radius: 50%; background: #fff; box-shadow: 0 1px 3px rgba(0,0,0,.35); margin-left: 60px; flex: none; }
      .tick { width: 6px; height: 6px; border-radius: 50%; background: #fff; margin-left: 5px; }
      .pm { font-size: 26px; width: 16px; text-align: center; color: #666; flex: none; }
      .zoom { font-size: 24px; margin-left: 35px; }
      </style>
      <span style="margin-left:50px;width:111px">Ready</span>
      <xl-icon name="a11y"></xl-icon>
      <span style="margin-left:14px;width:276px">Accessibility: Investigate</span>
      <div class="grid" style="margin-left:1921px"><xl-icon name="grid"></xl-icon></div>
      <xl-icon name="page" style="margin-left:31px"></xl-icon>
      <xl-icon name="brk" style="margin-left:45px"></xl-icon>
      <span class="pm" style="margin-left:37px">−</span>
      <div class="track"><div class="thumb"></div><div class="tick"></div></div>
      <span class="pm" style="margin-left:14px">+</span>
      <span class="zoom">74%</span>`
  }
}

customElements.define('xl-icon', XlIcon)
customElements.define('xl-chev', XlChev)
customElements.define('xl-select', XlSelect)
customElements.define('xl-large', XlLarge)
customElements.define('xl-app', XlApp)
customElements.define('xl-titlebar', XlTitlebar)
customElements.define('xl-menu-tab', XlMenuTab)
customElements.define('xl-menubar', XlMenubar)
customElements.define('xl-ribbon', XlRibbon)
customElements.define('xl-formula', XlFormula)
customElements.define('xl-sheet', XlSheet)
customElements.define('xl-toast', XlToast)
customElements.define('xl-sheet-tab', XlSheetTab)
customElements.define('xl-sheet-tabs', XlSheetTabs)
customElements.define('xl-status', XlStatus)
</script>
</body>
</html>
